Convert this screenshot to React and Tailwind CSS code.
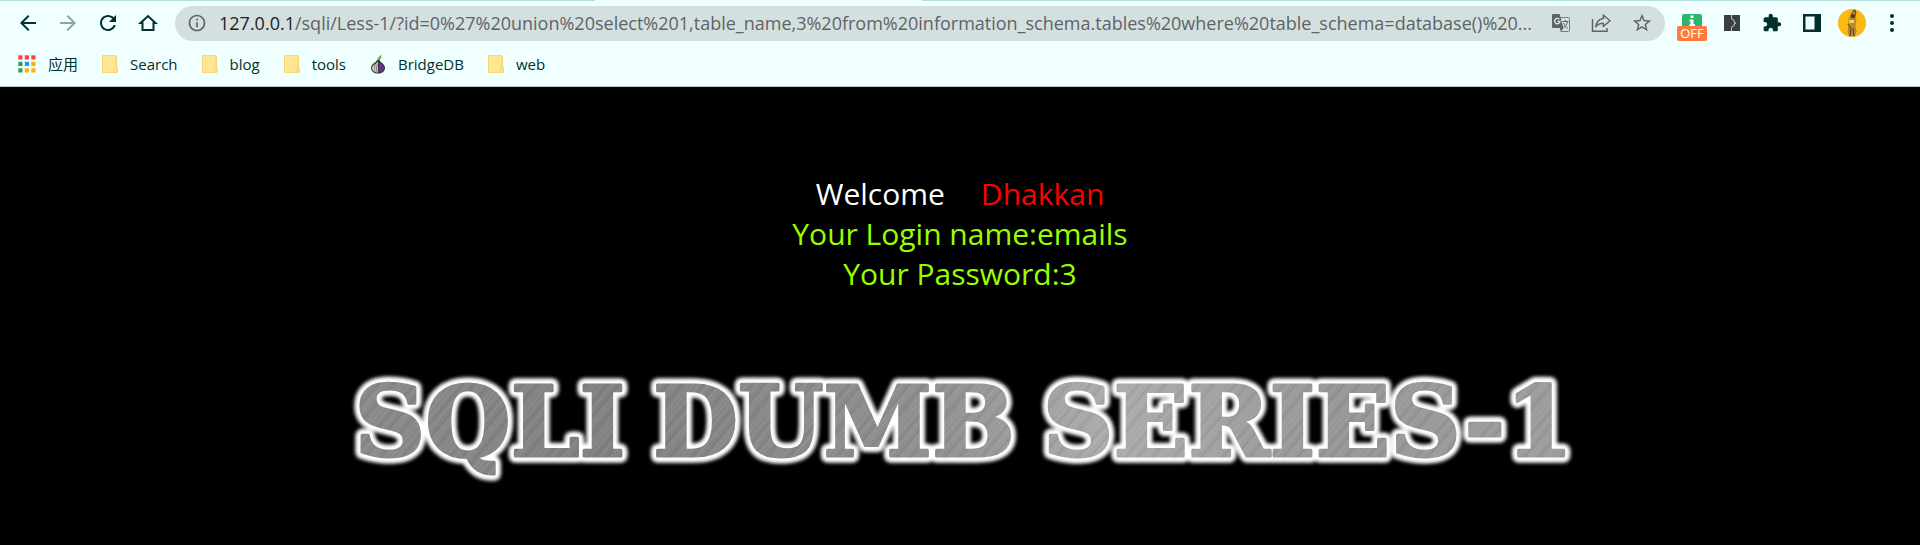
import { useId } from "react";

const ARROW = "M20 11H7.83l5.59-5.59L12 4l-8 8 8 8 1.41-1.41L7.83 13H20v-2z";

function Icon({ d, className }) {
  return (
    <svg viewBox="0 0 24 24" className={className} fill="currentColor" aria-hidden="true">
      <path d={d} />
    </svg>
  );
}

function NavButton({ label, disabled, children }) {
  return (
    <button
      type="button"
      aria-label={label}
      disabled={disabled}
      className="flex w-10 justify-center text-[#03302c] disabled:text-[#8fa5a4]"
    >
      {children}
    </button>
  );
}

function Folder() {
  return (
    <svg viewBox="0 0 16 18" className="h-[18px] w-4" aria-hidden="true">
      <path d="M1 0h12.5a1.5 1.5 0 0 1 1.5 1.500V12a2 2 0 0 1 1 2v2a2 2 0 0 1-2 2H1a1 1 0 0 1-1-1V1a1 1 0 0 1 1-1z" fill="#f7d66b" />
      <path d="M1 .8h12.500v11.500a2 2 0 0 0-1.800 2v3H1z" fill="#ffe694" />
      <path d="M12.600 13.500h1.800v3h-1.800z" fill="#ffe694" />
    </svg>
  );
}

const APP_COLORS = [
  "#fa4238", "#fa4238", "#fa4238",
  "#2ba24c", "#2196f3", "#fbb003",
  "#2ba24c", "#fbb003", "#fbb003",
];

function AppsGrid() {
  return (
    <svg viewBox="0 0 18 18" className="size-[18px]" aria-hidden="true">
      {APP_COLORS.map((c, i) => (
        <rect key={i} x={(i % 3) * 6.5 + 0.3} y={Math.floor(i / 3) * 6.5 + 0.3} width="4.2" height="4.2" fill={c} />
      ))}
    </svg>
  );
}

function Onion() {
  return (
    <svg viewBox="0 0 16 20" className="h-5 w-4" aria-hidden="true">
      <path d="M7 6.500C7.500 4 9 2 11.500.5c-.5 1.500-.6 2-.4 2.600L13 2.500c-2 1.300-3 2.500-3.500 4.500z" fill="#69b34c" />
      <path d="M7 6C6.500 8.500 1 9.500 1 14c0 3.500 3 5.500 7 5.500s7-2 7-5.500c0-4.500-5-5.500-5.500-8z" fill="#333" />
      <path d="M8.800 8c1.500 2 5.200 3 5.200 6 0 2.500-2.200 4.500-5.200 4.500z" fill="#6c2d91" />
      <path d="M8 7.500C6 10 2 11.500 2 14c0 2.500 2 4.500 6 4.500z" fill="#d8d7c4" />
      <path d="M7 9.500C4.500 12 3.500 14 5 18M7.500 10.500c-1.300 2.500-1.300 6-.2 8" stroke="#555" strokeWidth=".7" fill="none" />
    </svg>
  );
}

const BOOKMARKS = [
  { label: "Search", icon: Folder },
  { label: "blog", icon: Folder },
  { label: "tools", icon: Folder },
  { label: "BridgeDB", icon: Onion },
  { label: "web", icon: Folder },
];

function AddressBar() {
  return (
    <div className="flex h-[35px] min-w-0 flex-1 items-center rounded-full bg-[#d4e0df] px-3 text-[#5f6368]">
      <button type="button" aria-label="Site information" className="shrink-0">
        <Icon
          className="size-5"
          d="M11 7h2v2h-2zm0 4h2v6h-2zm1-9C6.480 2 2 6.480 2 12s4.480 10 10 10 10-4.480 10-10S17.520 2 12 2zm0 18c-4.410 0-8-3.590-8-8s3.590-8 8-8 8 3.590 8 8-3.590 8-8 8z"
        />
      </button>
      <a href="#" className="ml-3 min-w-0 flex-1 truncate text-lg text-[#5f6368]">
        <span className="text-[#202124]">127.0.0.1</span>
        /sqli/Less-1/?id=0%27%20union%20select%201,table_name,3%20from%20information_schema.tables%20where%20table_schema=database()%20...
      </a>
      <div className="flex shrink-0 items-center gap-5 pl-1">
        <button type="button" aria-label="Translate this page">
          <svg viewBox="0 0 20 20" className="size-5" aria-hidden="true">
            <path d="M9 4.500h8.500a1 1 0 0 1 1 1v12a1 1 0 0 1-1 1H10z" fill="none" stroke="#777c80" />
            <path d="M2 1h6.500l4 14H2a1 1 0 0 1-1-1V2a1 1 0 0 1 1-1z" fill="#5f6368" />
            <path d="M9 15h3.500L10 18.500z" fill="#5f6368" />
            <path d="M8.300 6.200A2.700 2.700 0 1 0 9 8.300H6.500" fill="none" stroke="#e4ecec" strokeWidth="1.300" />
            <path d="M11.500 8.500h6M14.300 7v1.500M16.500 8.500c-.5 3-2 5-4 6.500M12.500 10c1 2.500 2.500 4 4.500 5.500" fill="none" stroke="#5f6368" />
          </svg>
        </button>
        <button type="button" aria-label="Share this page">
          <svg viewBox="0 0 20 20" className="size-5" fill="none" stroke="currentColor" strokeWidth="1.500" aria-hidden="true">
            <path d="M1.500 6v12.300H16V15" />
            <path d="M12.300 2 19 7.800l-6.700 5.700v-3.300c-3.500 0-5.500 1-7.500 3.500.5-4.500 3-7.600 7.500-8.300z" strokeLinejoin="round" />
          </svg>
        </button>
        <button type="button" aria-label="Bookmark this tab">
          <Icon
            className="size-[22px]"
            d="M22 9.240l-7.190-.62L12 2 9.190 8.630 2 9.240l5.460 4.730L5.820 21 12 17.270 18.180 21l-1.630-7.030L22 9.240zM12 15.400l-3.760 2.270 1-4.280-3.320-2.880 4.380-.38L12 6.100l1.710 4.040 4.380.38-3.320 2.880 1 4.280L12 15.400z"
          />
        </button>
      </div>
    </div>
  );
}

function Extensions() {
  return (
    <div className="flex shrink-0 items-center pl-[7px] text-[#03302c]">
      <button type="button" aria-label="Proxy switch, off" className="flex w-10 flex-col items-center pt-2">
        <svg viewBox="0 0 20 12" className="h-3 w-5" aria-hidden="true">
          <path d="M2 0h16a2 2 0 0 1 2 2v10H0V2a2 2 0 0 1 2-2z" fill="#2fb56b" />
          <path d="M8.500 1.500h3V4h-3zM7.500 5.500h4V10H13v2H7.500v-2h1V7.500h-1z" fill="#fff" />
        </svg>
        <span className="w-[30px] rounded-xs bg-[#ff7a3d] text-center text-[13px] leading-[15px] text-white">OFF</span>
      </button>
      <button type="button" aria-label="Cookie extension" className="flex w-10 justify-center">
        <svg viewBox="0 0 16 16" className="size-4" aria-hidden="true">
          <path d="M0 0h16v16H0z" fill="#3c3f3f" />
          <path d="M7.500 0v4l2.500 1v2.500L12 8l-2 1v2l-2.500 1v4" fill="none" stroke="#b8c2c2" />
        </svg>
      </button>
      <button type="button" aria-label="Extensions" className="flex w-10 justify-center">
        <Icon
          className="size-5"
          d="M20.500 11H19V7c0-1.100-.9-2-2-2h-4V3.500C13 2.120 11.880 1 10.500 1S8 2.120 8 3.500V5H4c-1.100 0-1.990.9-1.990 2v3.800H3.500c1.490 0 2.700 1.210 2.700 2.700s-1.210 2.700-2.700 2.700H2V20c0 1.100.9 2 2 2h3.800v-1.500c0-1.490 1.210-2.700 2.700-2.700 1.490 0 2.700 1.210 2.700 2.700V22H17c1.100 0 2-.9 2-2v-4h1.500c1.380 0 2.500-1.120 2.500-2.500S21.880 11 20.500 11z"
        />
      </button>
      <button type="button" aria-label="Side panel" className="flex w-10 justify-center">
        <svg viewBox="0 0 18 18" className="size-[18px]" aria-hidden="true">
          <path fill="currentColor" fillRule="evenodd" d="M0 0h18v18H0zM2.500 2.500v13h9v-13z" />
        </svg>
      </button>
      <button type="button" aria-label="Profile" className="flex w-10 justify-center">
        <svg viewBox="0 0 28 28" className="size-7" aria-hidden="true">
          <circle cx="14" cy="14" r="14" fill="#fdb913" />
          <path d="M12 6l2-1 .5-4 2-1 1.500 2-.5 5 1 5-1 5 1 5-1.500 5.500h-6L9.500 23l1-6-.5-5z" fill="#b98a2c" />
          <path d="M14 4l3-3 1 3-2 5-3-1zM10 15l3 5-1 7M15 19l1 8" stroke="#5a3d2a" strokeWidth="1" fill="none" />
          <path d="M14 5l3 1-1 3-3-1z" fill="#5a3328" />
          <path d="M11 11h5v3h-5z" fill="#ecd06a" />
        </svg>
      </button>
      <button type="button" aria-label="Browser menu" className="flex w-10 justify-center">
        <svg viewBox="0 0 4 18" className="h-[18px] w-1" fill="currentColor" aria-hidden="true">
          <circle cx="2" cy="2" r="2" />
          <circle cx="2" cy="9" r="2" />
          <circle cx="2" cy="16" r="2" />
        </svg>
      </button>
    </div>
  );
}

function Toolbar() {
  return (
    <div className="flex h-[45px] items-center px-2 pb-px">
      <div className="flex w-[167px] shrink-0 items-center">
        <NavButton label="Back"><Icon className="size-6" d={ARROW} /></NavButton>
        <NavButton label="Forward" disabled><Icon className="size-6 rotate-180" d={ARROW} /></NavButton>
        <NavButton label="Reload">
          <Icon
            className="size-6"
            d="M17.650 6.350C16.200 4.900 14.210 4 12 4c-4.420 0-7.990 3.580-7.990 8s3.570 8 7.990 8c3.730 0 6.840-2.550 7.730-6h-2.080c-.82 2.330-3.040 4-5.650 4-3.310 0-6-2.690-6-6s2.690-6 6-6c1.660 0 3.140.69 4.220 1.780L13 11h7V4l-2.350 2.350z"
          />
        </NavButton>
        <NavButton label="Home">
          <svg viewBox="0 0 24 24" className="size-6" fill="none" stroke="currentColor" strokeWidth="2" aria-hidden="true">
            <path d="M4.500 12 12 5l7.500 7H17.500v7h-11v-7z" />
          </svg>
        </NavButton>
      </div>
      <AddressBar />
      <Extensions />
    </div>
  );
}

function BookmarksBar() {
  return (
    <nav aria-label="Bookmarks" className="flex h-10 items-center gap-6 pb-1 pl-[18px] text-[15px] text-[#03302c]">
      <a href="#" className="flex items-center gap-3"><AppsGrid />应用</a>
      {BOOKMARKS.map(({ label, icon: BookmarkIcon }) => (
        <a key={label} href="#" className="flex items-center gap-3">
          <BookmarkIcon />
          {label}
        </a>
      ))}
    </nav>
  );
}

const WORDS = [
  { text: "SQLI", center: 150 },
  { text: "DUMB", center: 494 },
  { text: "SERIES-1", center: 968 },
];

function Banner() {
  const id = useId();
  const metal = `${id}metal`;
  const streaks = `${id}streaks`;
  const brushed = `${id}brushed`;
  const words = WORDS.map(({ text, center }) => (
    <tspan key={text} x={center} y="107">{text}</tspan>
  ));
  return (
    <svg
      viewBox="0 0 1240 150"
      className="w-[1240px] max-w-full font-['DejaVu_Serif',serif] text-[98px] font-bold"
      role="img"
      aria-label="SQLI DUMB SERIES-1"
    >
      <defs>
        <linearGradient id={metal} gradientUnits="userSpaceOnUse" x1="0" y1="0" x2="1240" y2="0">
          <stop offset="0" stopColor="#8a8a8a" />
          <stop offset=".2" stopColor="#808080" />
          <stop offset=".48" stopColor="#8f8f8f" />
          <stop offset=".62" stopColor="#ababab" />
          <stop offset=".8" stopColor="#969696" />
          <stop offset="1" stopColor="#9c9c9c" />
        </linearGradient>
        <pattern id={streaks} width="37" height="60" patternUnits="userSpaceOnUse" patternTransform="rotate(40)">
          <path d="M2 0v60M9.500 0v60M21 0v60M31 0v60" stroke="#fff" strokeOpacity=".1" />
          <path d="M5.500 0v60M15 0v60M26 0v60" stroke="#000" strokeOpacity=".05" strokeWidth="2" />
          <path d="M18 0v60M34.500 0v60" stroke="#fff" strokeOpacity=".18" strokeWidth=".6" />
        </pattern>
        <pattern id={brushed} width="1240" height="150" patternUnits="userSpaceOnUse">
          <rect width="1240" height="150" fill={`url(#${metal})`} />
          <rect width="1240" height="150" fill={`url(#${streaks})`} />
        </pattern>
        <filter id={`${id}glow`} x="-5%" y="-20%" width="110%" height="140%">
          <feGaussianBlur stdDeviation="2.200" result="halo" />
          <feMerge>
            <feMergeNode in="halo" />
            <feMergeNode in="halo" />
          </feMerge>
        </filter>
      </defs>
      <g textAnchor="middle" strokeLinejoin="round">
        <text fill="#fff" stroke="#fff" strokeWidth="11" filter={`url(#${id}glow)`} aria-hidden="true">{words}</text>
        <text fill={`url(#${brushed})`} stroke={`url(#${brushed})`} strokeWidth="3">{words}</text>
      </g>
    </svg>
  );
}

export default function App() {
  return (
    <div className="min-h-screen bg-black font-['Open_Sans','Noto_Sans_CJK_SC',sans-serif]">
      <header className="border-b border-[#b7c4c4] bg-[#f0ffff]">
        <div className="flex h-px">
          <div className="w-[31%] bg-[#b0e0de]" />
          <div className="w-[17%]" />
          <div className="flex-1 bg-[#b0e0de]" />
        </div>
        <Toolbar />
        <BookmarksBar />
      </header>
      <main className="flex flex-col items-center pt-[87px]">
        <div className="text-center text-[30px] leading-10 text-[#99ff00]">
          <p className="flex justify-center gap-9 text-white">
            Welcome <span className="text-[#ff0000]">Dhakkan</span>
          </p>
          <p>Your Login name:emails</p>
          <p>Your Password:3</p>
        </div>
        <h1 className="mt-[55px] flex w-full justify-center"><Banner /></h1>
      </main>
    </div>
  );
}
